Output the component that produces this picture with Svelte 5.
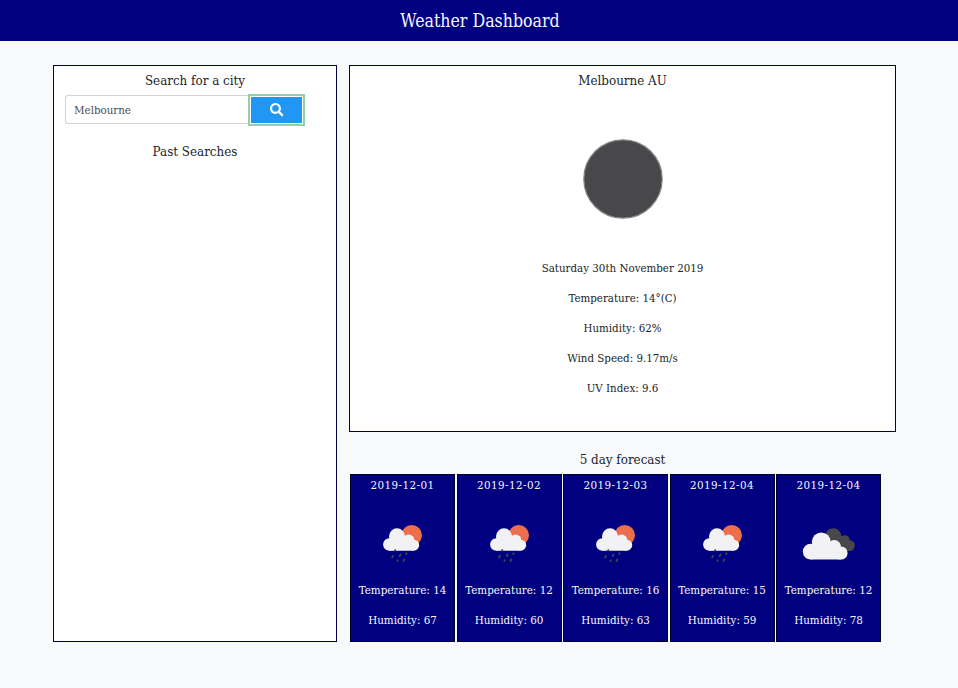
<script>
  let city = $state('Melbourne');

  const details = [
    'Saturday 30th November 2019',
    'Temperature: 14°(C)',
    'Humidity: 62%',
    'Wind Speed: 9.17m/s',
    'UV Index: 9.6'
  ];

  const forecast = [
    { date: '2019-12-01', icon: 'rain', temperature: 14, humidity: 67 },
    { date: '2019-12-02', icon: 'rain', temperature: 12, humidity: 60 },
    { date: '2019-12-03', icon: 'rain', temperature: 16, humidity: 63 },
    { date: '2019-12-04', icon: 'rain', temperature: 15, humidity: 59 },
    { date: '2019-12-04', icon: 'clouds', temperature: 12, humidity: 78 }
  ];
</script>

<div class="page">
  <header><h1>Weather Dashboard</h1></header>
  <main>
    <section class="search">
      <h2>Search for a city</h2>
      <form onsubmit={(e) => e.preventDefault()}>
        <input type="text" aria-label="City" bind:value={city} />
        <button type="submit" aria-label="Search">
          <svg viewBox="0 0 512 512" width="13.500" height="13.500" fill="#fff">
            <path d="M505 442.700 405.300 343c-4.500-4.500-10.600-7-17-7H372c27.600-35.300 44-79.700 44-128C416 93.100 322.900 0 208 0S0 93.100 0 208s93.100 208 208 208c48.300 0 92.700-16.400 128-44v16.300c0 6.400 2.500 12.500 7 17l99.700 99.700c9.400 9.400 24.600 9.400 33.900 0l28.300-28.300c9.400-9.400 9.400-24.600.1-34zM208 336c-70.700 0-128-57.200-128-128 0-70.700 57.200-128 128-128 70.700 0 128 57.200 128 128 0 70.700-57.200 128-128 128z" />
          </svg>
        </button>
      </form>
      <h2 class="past">Past Searches</h2>
    </section>

    <div class="results">
      <section class="current">
        <h2>Melbourne AU</h2>
        <svg class="moon" viewBox="0 0 80 80" width="80" height="80">
          <circle cx="40" cy="40" r="39.200" fill="#48484a" stroke="#858585" stroke-width="1.200" />
        </svg>
        {#each details as line}
          <p>{line}</p>
        {/each}
      </section>

      <h2 class="title">5 day forecast</h2>
      <div class="cards">
        {#each forecast as day}
          <article>
            <p class="date">{day.date}</p>
            <svg viewBox="0 0 103 80" width="103" height="80">
              {#if day.icon === 'rain'}
                <circle cx="60.700" cy="30.200" r="10.300" fill="#ec6e4c" />
                <g fill="#f2f2f4">
                  <circle cx="38.300" cy="39.500" r="6.200" />
                  <circle cx="46" cy="31.300" r="8" />
                  <circle cx="57.500" cy="35.500" r="5.900" />
                  <circle cx="62.700" cy="40.200" r="5.500" />
                  <path d="M38.300 33h20l4.400 4v8.700H38.300z" />
                </g>
                <g stroke="#48484a" stroke-width="1.700" stroke-linecap="round">
                  <path d="m44.300 45-.2.500M49.600 49.500l-.9 1.500M55.600 48.200l-.5.800M42 51l-.9 1.500M46.800 55.200l-.5.700M53.300 54.500l-.9 1.500" />
                </g>
              {:else}
                <g fill="#48484a">
                  <circle cx="56.300" cy="31.500" r="8.200" />
                  <circle cx="67.800" cy="35" r="4.800" />
                  <circle cx="72.300" cy="40.500" r="5.500" />
                  <path d="M56 31h12l4 8v7H56z" />
                </g>
                <g fill="#f2f2f4">
                  <circle cx="33.700" cy="46.700" r="7.900" />
                  <circle cx="44.300" cy="36.900" r="9.500" />
                  <circle cx="57.300" cy="41.700" r="6.700" />
                  <circle cx="64" cy="48" r="6.600" />
                  <path d="M33.700 40h24l6.300 5v9.600H33.700z" />
                </g>
              {/if}
            </svg>
            <p>Temperature: {day.temperature}</p>
            <p class="humidity">Humidity: {day.humidity}</p>
          </article>
        {/each}
      </div>
    </div>
  </main>
</div>

<style>
  :global(body) {
    margin: 0;
    background: #f8f9fb;
  }
  .page {
    height: 688px;
    overflow: hidden;
    background: #f8f9fb;
    color: #212529;
    font-family: 'DejaVu Serif Condensed', 'DejaVu Serif', serif;
    font-stretch: condensed;
    font-size: 11.450px;
    text-align: center;
  }
  * {
    box-sizing: border-box;
  }
  h1,
  h2,
  p {
    margin: 0;
    font-weight: 400;
  }
  header {
    height: 41px;
    background: #000080;
    color: #f8f9fa;
  }
  h1 {
    padding-left: 2px;
    font-size: 17.600px;
    line-height: 42px;
  }
  h2 {
    font-size: 13.250px;
    line-height: 18px;
  }
  main {
    display: flex;
    gap: 12px;
    padding: 24px 62px 0 53px;
  }
  .search {
    width: 284px;
    height: 577px;
    padding: 6px 11px;
    background: #fff;
    border: 1px solid #00004a;
  }
  .search h2 {
    width: 260px;
  }
  form {
    display: flex;
    height: 29px;
    margin-top: 5px;
  }
  input {
    width: 185px;
    height: 29px;
    padding: 1px 8px 0;
    border: 1px solid #ced4da;
    border-right: 0;
    border-radius: 3px 0 0 3px;
    outline: 0;
    background: #fff;
    color: #495057;
    font: inherit;
  }
  button {
    display: flex;
    align-items: center;
    justify-content: center;
    width: 53px;
    height: 28px;
    margin-top: 1px;
    padding: 0;
    border: 1px solid #fff;
    background: #2196f3;
    box-shadow: 0 0 0 2px #94cfab;
  }
  .search .past {
    margin-top: 19px;
  }
  .results {
    width: 547px;
  }
  .current {
    height: 367px;
    padding-top: 6px;
    background: #fff;
    border: 1px solid #00004a;
  }
  .moon {
    display: block;
    margin: 49px auto 34px;
  }
  .current p {
    height: 30px;
    line-height: 31px;
  }
  .title {
    margin-top: 19px;
  }
  .cards {
    display: flex;
    gap: 1.500px;
    padding: 5px 0 0 1px;
  }
  article {
    width: 105px;
    height: 168px;
    flex: none;
    border: 1px solid #000028;
    background: #000080;
    color: #f8f9fa;
  }
  article p {
    height: 30px;
    line-height: 31px;
    font-size: 11.500px;
    white-space: nowrap;
  }
  article .date {
    height: 20px;
    line-height: 21px;
    letter-spacing: 0.450px;
  }
  article svg {
    display: block;
    width: 103px;
    height: 80px;
    margin-top: 10px;
    margin-bottom: -10px;
  }
</style>
